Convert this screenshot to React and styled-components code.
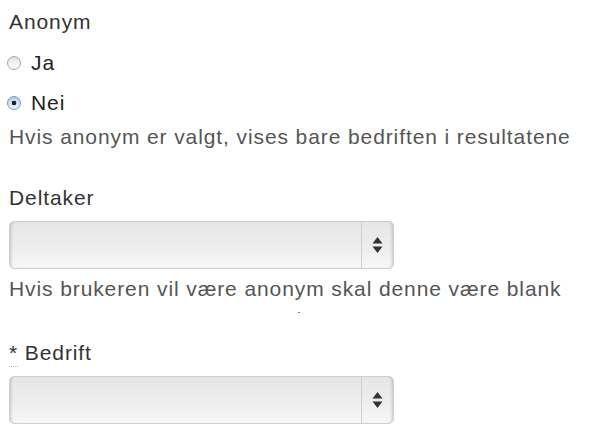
import styled, { createGlobalStyle } from 'styled-components'

const Global = createGlobalStyle`
body {
  margin: 0;
  background: #fff;
  font-family: "Helvetica Neue", "Liberation Sans", Arial, sans-serif;
  color: #333;
}
`

const Form = styled.form`
padding: 8px 0 0 9px;
width: 592px;
`

const Label = styled.div`
font-size: 21px;
letter-spacing: 0.9px;
line-height: 28px;
color: #333;
margin: ${(p) => p.$top || 0}px 0 ${(p) => p.$bottom || 0}px 0;
`

const Required = styled.abbr`
text-decoration: none;
border-bottom: 1px dotted #bbb;
padding-bottom: 2px;
`

const RadioRow = styled.label`
display: flex;
align-items: center;
gap: 10px;
margin-left: -2px;
height: 40px;
font-size: 21px;
letter-spacing: 0.9px;
color: #222;
`

const RadioDot = styled.span`
width: 14px;
height: 14px;
border-radius: 50%;
border: 1px solid ${(p) => (p.$on ? '#7d96b8' : '#aaa')};
background: ${(p) =>
    p.$on
      ? 'radial-gradient(circle, #222 0 2px, transparent 2.6px), linear-gradient(#b7d3f6, #eaf3fd)'
      : 'linear-gradient(#e6e6e6, #fdfdfd)'};
box-sizing: border-box;
box-shadow: inset 0 1px 1px rgba(0, 0, 0, 0.08);
`

const Help = styled.p`
margin: 0;
font-size: 21px;
letter-spacing: 0.9px;
line-height: 28px;
color: #555;
`

const SelectBox = styled.div`
display: flex;
width: 385px;
height: 48px;
box-sizing: border-box;
border: 1px solid #cfcfcf;
border-radius: 5px;
background: linear-gradient(#e6e6e6, #eeeeee 60%, #f7f7f7);
box-shadow: inset 3px 0 3px -2px rgba(0, 0, 0, 0.18), inset -3px 0 3px -2px rgba(0, 0, 0, 0.18);
margin-bottom: 6px;
`

const SelectValue = styled.div`
flex: 1;
`

const Arrows = styled.div`
width: 31px;
border-left: 1px solid #cfcfcf;
display: flex;
align-items: center;
justify-content: center;
`

const Tick = styled.div`
width: 2px;
height: 1px;
background: #777;
margin: 9px 0 0 289px;
`

function Select() {
  return (
    <SelectBox>
      <SelectValue />
      <Arrows>
        <svg width="11" height="18" viewBox="0 0 11 18">
          <path d="M5.5 1 L10.5 7.5 L0.5 7.5 Z" fill="#333" />
          <path d="M5.5 17 L10.5 10.5 L0.5 10.5 Z" fill="#333" />
        </svg>
      </Arrows>
    </SelectBox>
  )
}

export default function App() {
  return (
    <>
      <Global />
      <Form>
        <Label $bottom={7}>Anonym</Label>
        <RadioRow>
          <RadioDot />
          Ja
        </RadioRow>
        <RadioRow>
          <RadioDot $on />
          Nei
        </RadioRow>
        <Help>Hvis anonym er valgt, vises bare bedriften i resultatene</Help>
        <Label $top={33} $bottom={9}>Deltaker</Label>
        <Select />
        <Help>Hvis brukeren vil være anonym skal denne være blank</Help>
        <Tick />
        <Label $top={26} $bottom={9}>
          <Required title="required">*</Required> Bedrift
        </Label>
        <Select />
      </Form>
    </>
  )
}
